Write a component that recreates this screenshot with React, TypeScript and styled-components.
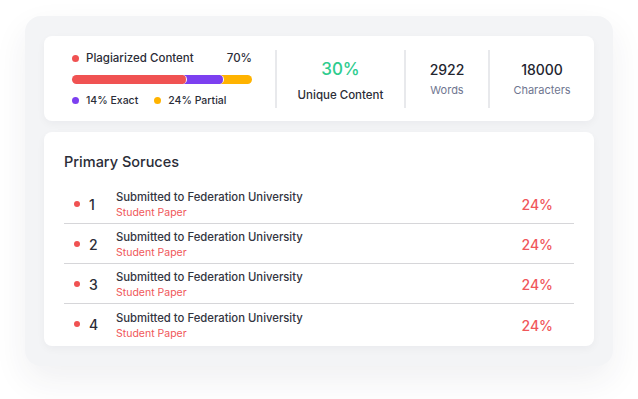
import React from "react";
import styled, { createGlobalStyle } from "styled-components";

const Global = createGlobalStyle`
  html, body { margin: 0; padding: 0; background: #ffffff; }
  body { font-family: Inter, "Noto Sans", sans-serif; color: #2b2d38; }
`;

const Stage = styled.div`
  padding: 16px 0 0 25px;
  width: 638px;
  height: 399px;
  box-sizing: border-box;
`;

const Panel = styled.div`
  width: 588px;
  height: 350px;
  box-sizing: border-box;
  padding: 20px 19px;
  background: #f3f4f6;
  border-radius: 16px;
  box-shadow: 0 14px 34px rgba(40, 45, 70, 0.07);
  display: flex;
  flex-direction: column;
  gap: 11px;
`;

const Card = styled.div`
  background: #ffffff;
  border-radius: 8px;
  box-shadow: 0 3px 8px rgba(30, 35, 60, 0.04);
`;

const StatsCard = styled(Card)`
  height: 85px;
  display: flex;
  align-items: stretch;
`;

const PlagSection = styled.div`
  width: 231px;
  box-sizing: border-box;
  padding: 14px 23px 0 28px;
  display: flex;
  flex-direction: column;
`;

const HeadRow = styled.div`
  display: flex;
  align-items: center;
  justify-content: space-between;
  font-size: 11.5px;
  font-weight: 500;
  color: #2b2d38;
  height: 16px;
`;

const Label = styled.span`
  display: flex;
  align-items: center;
  gap: 7px;
`;

const Dot = styled.span<{ $c: string; $s?: number }>`
  width: ${(p) => p.$s ?? 7}px;
  height: ${(p) => p.$s ?? 7}px;
  border-radius: 50%;
  background: ${(p) => p.$c};
  flex: none;
`;

const Bar = styled.div`
  margin-top: 9px;
  height: 9px;
  display: flex;
`;

const Seg = styled.div<{ $c: string; $z: number; $first?: boolean }>`
  position: relative;
  z-index: ${(p) => p.$z};
  background: ${(p) => p.$c};
  border-radius: 5px;
  box-sizing: border-box;
  border-right: 1.5px solid #ffffff;
  margin-left: ${(p) => (p.$first ? 0 : -6)}px;
  &:last-child {
    border-right: none;
  }
`;

const Legend = styled.div`
  margin-top: 9px;
  height: 14px;
  display: flex;
  align-items: center;
  gap: 16px;
  font-size: 10.5px;
  font-weight: 500;
  color: #2b2d38;
`;

const Divider = styled.div`
  width: 2px;
  height: 58px;
  align-self: center;
  background: #e8e9ec;
  flex: none;
`;

const StatSection = styled.div<{ $w: number; $top: number }>`
  width: ${(p) => p.$w}px;
  padding-top: ${(p) => p.$top}px;
  box-sizing: border-box;
  display: flex;
  flex-direction: column;
  align-items: center;
`;

const BigGreen = styled.div`
  font-size: 17px;
  font-weight: 500;
  color: #2ecc8e;
  line-height: 20px;
`;

const UniqueLabel = styled.div`
  margin-top: 9px;
  font-size: 11.5px;
  line-height: 14px;
  font-weight: 500;
  color: #2b2d38;
`;

const Num = styled.div`
  font-size: 14px;
  font-weight: 500;
  color: #23252f;
  line-height: 18px;
`;

const Sub = styled.div`
  margin-top: 4px;
  font-size: 11px;
  line-height: 14px;
  color: #6f7690;
`;

const SourcesCard = styled(Card)`
  flex: 1;
  padding: 21px 20px 0 20px;
  display: flex;
  flex-direction: column;
`;

const Title = styled.div`
  font-size: 14.5px;
  font-weight: 500;
  color: #2b2d38;
  line-height: 18px;
  margin-bottom: 13px;
`;

const Row = styled.div<{ $last?: boolean }>`
  height: 40px;
  box-sizing: border-box;
  display: flex;
  align-items: center;
  border-bottom: ${(p) => (p.$last ? "none" : "1px solid #d6d6d9")};
  padding: 0 21px 0 10px;
`;

const Index = styled.div`
  width: 27px;
  margin-left: 9px;
  margin-top: 1px;
  font-size: 14px;
  font-weight: 500;
  color: #2b2d38;
`;

const Info = styled.div`
  flex: 1;
  display: flex;
  flex-direction: column;
  gap: 2px;
  margin-top: 2px;
`;

const SrcName = styled.div`
  font-size: 11.3px;
  font-weight: 500;
  color: #33353f;
`;

const SrcType = styled.div`
  font-size: 10.5px;
  color: #f0575a;
`;

const Pct = styled.div`
  font-size: 14px;
  font-weight: 500;
  color: #f0575a;
  margin-top: 2px;
`;

const RED = "#f05252";
const PURPLE = "#7c3ff0";
const ORANGE = "#ffb300";

export default function App() {
  const rows = [1, 2, 3, 4];
  return (
    <>
      <Global />
      <Stage>
        <Panel>
          <StatsCard>
            <PlagSection>
              <HeadRow>
                <Label>
                  <Dot $c={RED} />
                  Plagiarized Content
                </Label>
                <span>70%</span>
              </HeadRow>
              <Bar>
                <Seg $c={RED} $z={3} $first style={{ width: 115 }} />
                <Seg $c={PURPLE} $z={2} style={{ width: 43 }} />
                <Seg $c={ORANGE} $z={1} style={{ flex: 1 }} />
              </Bar>
              <Legend>
                <Label>
                  <Dot $c={PURPLE} />
                  14% Exact
                </Label>
                <Label>
                  <Dot $c={ORANGE} />
                  24% Partial
                </Label>
              </Legend>
            </PlagSection>
            <Divider />
            <StatSection $w={127} $top={23}>
              <BigGreen>30%</BigGreen>
              <UniqueLabel>Unique Content</UniqueLabel>
            </StatSection>
            <Divider />
            <StatSection $w={82} $top={25}>
              <Num>2922</Num>
              <Sub>Words</Sub>
            </StatSection>
            <Divider />
            <StatSection $w={104} $top={25}>
              <Num>18000</Num>
              <Sub>Characters</Sub>
            </StatSection>
          </StatsCard>
          <SourcesCard>
            <Title>Primary Soruces</Title>
            {rows.map((n, i) => (
              <Row key={n} $last={i === rows.length - 1}>
                <Dot $c={RED} $s={6} />
                <Index>{n}</Index>
                <Info>
                  <SrcName>Submitted to Federation University</SrcName>
                  <SrcType>Student Paper</SrcType>
                </Info>
                <Pct>24%</Pct>
              </Row>
            ))}
          </SourcesCard>
        </Panel>
      </Stage>
    </>
  );
}
